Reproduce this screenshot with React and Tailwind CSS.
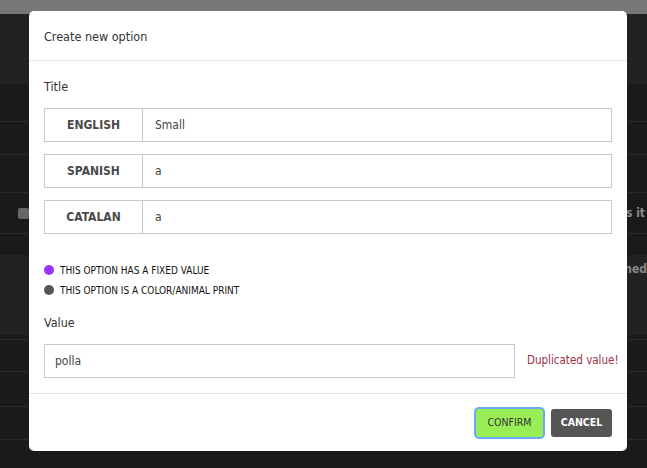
import React from "react";

const font = { fontFamily: '"DejaVu Sans Condensed", "DejaVu Sans", sans-serif' };

const LangRow = ({ label, value }) => (
  <div className="flex h-[34px] border border-[#c8c8c8]">
    <div className="w-[98px] shrink-0 flex items-center justify-center border-r border-[#c8c8c8] text-[12px] font-bold text-[#4a4a4a]">
      {label}
    </div>
    <div className="flex-1 flex items-center pl-[12px] text-[12px] text-[#444]">{value}</div>
  </div>
);

const BgRow = ({ className, children }) => (
  <div className={`border-b border-[#2a2a2a] ${className}`}>{children}</div>
);

const App = () => {
  return (
    <div className="relative w-[647px] h-[468px] overflow-hidden bg-[#1a1a1a] font-stretch-condensed" style={font}>
      {/* page behind the overlay */}
      <div className="h-[14px] bg-[#777]" />
      <div className="h-[70px] bg-[#222]" />
      <BgRow className="h-[38px]" />
      <BgRow className="h-[33px]" />
      <BgRow className="h-[38px]" />
      <BgRow className="h-[41px] flex items-center justify-between pl-[18px] pr-[2px]">
        <div className="w-[11px] h-[11px] rounded-[2px] bg-[#666]" />
        <span className="text-[12px] font-bold text-[#888]">is it</span>
      </BgRow>
      <div className="h-[21px]" />
      <div className="h-[80px] bg-[#222] flex justify-end pt-[5px]">
        <span className="text-[12px] font-bold text-[#888]">ined</span>
      </div>
      <BgRow className="h-[5px]" />
      <BgRow className="h-[32px]" />
      <BgRow className="h-[35px]" />
      <BgRow className="h-[33px]" />

      {/* modal */}
      <div className="absolute left-[29px] top-[11px] w-[598px] h-[440px] bg-white rounded-[5px] flex flex-col">
        <div className="h-[50px] shrink-0 border-b border-[#e2e2e2] flex items-center px-[15px] pt-[3px] text-[12.5px] text-[#333]">
          Create new option
        </div>
        <div className="px-[15px] pt-[18px] flex-1">
          <div className="h-[16px] flex items-center text-[12.5px] text-[#333] mb-[13px]">Title</div>
          <div className="flex flex-col gap-[12px]">
            <LangRow label="ENGLISH" value="Small" />
            <LangRow label="SPANISH" value="a" />
            <LangRow label="CATALAN" value="a" />
          </div>
          <div className="mt-[26px] flex flex-col text-[10px] text-[#111]">
            <div className="h-[20px] flex items-center gap-[6px]">
              <span className="w-[10px] h-[10px] rounded-full bg-[#9933ff]" />
              THIS OPTION HAS A FIXED VALUE
            </div>
            <div className="h-[20px] flex items-center gap-[6px]">
              <span className="w-[10px] h-[10px] rounded-full bg-[#555]" />
              THIS OPTION IS A COLOR/ANIMAL PRINT
            </div>
          </div>
          <div className="mt-[15px] h-[16px] flex items-center text-[12.5px] text-[#333]">Value</div>
          <div className="mt-[13px] flex items-center gap-[12px]">
            <div className="w-[471px] shrink-0 h-[34px] border border-[#c8c8c8] flex items-center pl-[10px] text-[12px] text-[#444]">
              polla
            </div>
            <span className="whitespace-nowrap text-[11.5px] text-[#9b3344]">Duplicated value!</span>
          </div>
        </div>
        <div className="h-[58px] shrink-0 border-t border-[#e2e2e2] flex items-center justify-end gap-[8px] px-[15px]">
          <button className="w-[67px] h-[28px] rounded-[3px] bg-[#99ee55] text-[10.5px] text-[#333] ring-2 ring-[#6aa9ff]">
            CONFIRM
          </button>
          <button className="w-[61px] h-[28px] rounded-[3px] bg-[#555] text-[10.5px] font-bold text-white">
            CANCEL
          </button>
        </div>
      </div>
    </div>
  );
};

export default App;
